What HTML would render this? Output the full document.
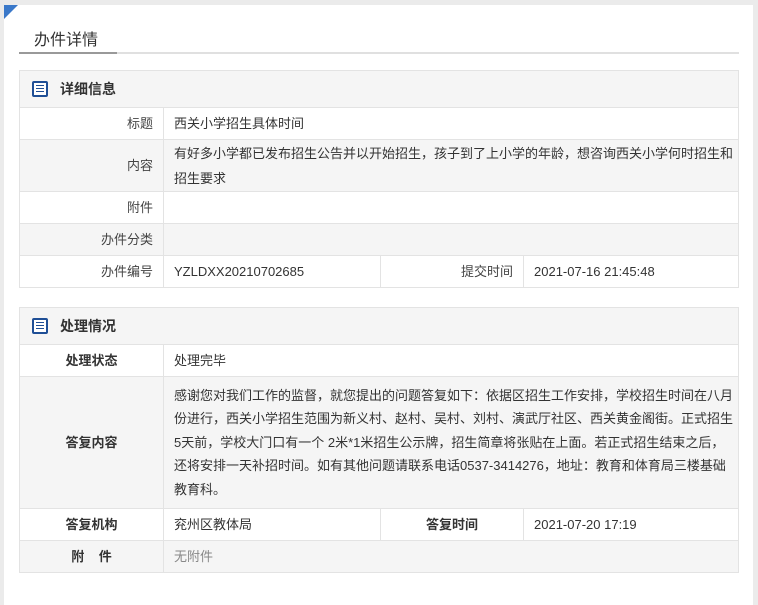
<!DOCTYPE html><html><head><meta charset="utf-8"><style>
body{margin:0;background:#ebebeb;font-family:"Liberation Sans","Noto Sans CJK SC",sans-serif;font-size:13px;color:#333}
.card{position:absolute;left:4px;top:5px;width:749px;height:600px;background:#fff}
.tri{position:absolute;left:4px;top:5px;width:0;height:0;border-top:14px solid #3a78c9;border-right:14px solid transparent}
.title{position:absolute;left:34px;top:26px;font-size:16px;color:#333}
.ul{position:absolute;left:19px;top:52px;width:720px;height:2px;background:#e0e0e0}
.ul i{position:absolute;left:0;top:0;width:98px;height:2px;background:#999}
table{position:absolute;left:19px;width:720px;border-collapse:collapse}
td{border:1px solid #e3e3e3;padding:0 2px 0 10px;height:31px;line-height:25px}
td.l{text-align:right;width:123px;color:#444;padding-right:10px}
tr.g td{background:#f5f5f5}
.hd td{background:#f5f5f5;height:36px;font-weight:bold;font-size:14px;padding-left:12px}
.ic{display:inline-block;width:12px;height:12px;border:2px solid #1f4f96;border-radius:2px;vertical-align:-3px;margin-right:12px;position:relative;background:#fff}
.ic:after{content:"";position:absolute;left:2px;top:2px;width:8px;height:1px;background:#1f4f96;box-shadow:0 3px #1f4f96,0 6px #1f4f96}
.b td.l{text-align:center;font-weight:bold;color:#333}
</style></head><body>
<div class="card"></div><div class="tri"></div>
<div class="title">办件详情</div><div class="ul"><i></i></div>
<table style="top:70px">
<tr class="hd"><td colspan="4"><span class="ic"></span>详细信息</td></tr>
<tr><td class="l">标题</td><td colspan="3">西关小学招生具体时间</td></tr>
<tr class="g"><td class="l">内容</td><td colspan="3" style="height:51px">有好多小学都已发布招生公告并以开始招生，孩子到了上小学的年龄，想咨询西关小学何时招生和招生要求</td></tr>
<tr><td class="l">附件</td><td colspan="3"></td></tr>
<tr class="g"><td class="l">办件分类</td><td colspan="3"></td></tr>
<tr><td class="l">办件编号</td><td style="width:204px">YZLDXX20210702685</td><td class="l" style="width:122px">提交时间</td><td>2021-07-16 21:45:48</td></tr>
</table>
<table style="top:307px" class="b">
<tr class="hd"><td colspan="4"><span class="ic"></span>处理情况</td></tr>
<tr><td class="l">处理状态</td><td colspan="3">处理完毕</td></tr>
<tr class="g"><td class="l">答复内容</td><td colspan="3" style="height:131px;line-height:23.5px">感谢您对我们工作的监督，就您提出的问题答复如下：依据区招生工作安排，学校招生时间在八月份进行，西关小学招生范围为新义村、赵村、吴村、刘村、演武厅社区、西关黄金阁街。正式招生5天前，学校大门口有一个 2米*1米招生公示牌，招生简章将张贴在上面。若正式招生结束之后，还将安排一天补招时间。如有其他问题请联系电话0537-3414276，地址：教育和体育局三楼基础教育科。</td></tr>
<tr><td class="l">答复机构</td><td style="width:204px">兖州区教体局</td><td class="l" style="width:122px">答复时间</td><td>2021-07-20 17:19</td></tr>
<tr class="g"><td class="l">附&nbsp;&nbsp;&nbsp;&nbsp;件</td><td colspan="3" style="color:#888">无附件</td></tr>
</table>
</body></html>
